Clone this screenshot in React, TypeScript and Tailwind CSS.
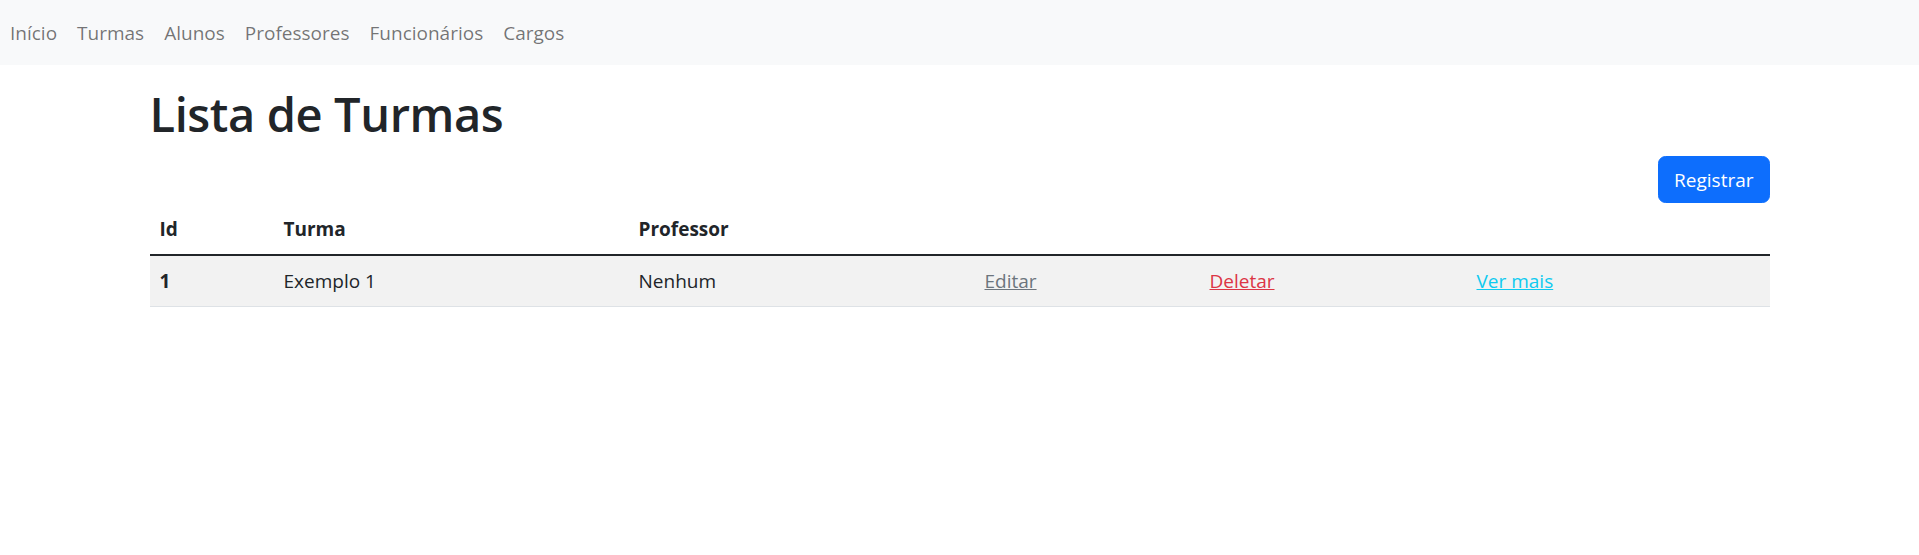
const navLinks = ["Início", "Turmas", "Alunos", "Professores", "Funcionários", "Cargos"];

const turmas = [{ id: 1, nome: "Exemplo 1", professor: "Nenhum" }];

export default function App() {
  return (
    <div
      className="min-h-screen bg-white text-[19px] leading-[30px] text-[#212529]"
      style={{ fontFamily: '"Open Sans", "Noto Sans", sans-serif' }}
    >
      <nav className="flex h-[65px] items-center bg-[#f8f9fa]">
        <ul className="flex">
          {navLinks.map((link) => (
            <li key={link}>
              <a href="#" className="block px-[10px] text-black/55">
                {link}
              </a>
            </li>
          ))}
        </ul>
      </nav>

      <main className="mx-auto w-[1620px] pt-[19px]">
        <h1 className="text-[47px] font-semibold leading-[60px] tracking-[-0.4px]">Lista de Turmas</h1>

        <div className="mt-[12px] flex justify-end">
          <button className="h-[47px] rounded-[7.5px] border border-[#0d6efd] bg-[#0d6efd] px-[15px] text-white">
            Registrar
          </button>
        </div>

        <table className="mt-[1px] w-full border-collapse text-left">
          <colgroup>
            <col className="w-[124px]" />
            <col className="w-[355px]" />
            <col className="w-[346px]" />
            <col className="w-[225px]" />
            <col className="w-[267px]" />
            <col />
          </colgroup>
          <thead>
            <tr className="border-b-[2.5px] border-[#212529]">
              <th className="p-[10px] font-bold">Id</th>
              <th className="p-[10px] font-bold">Turma</th>
              <th className="p-[10px] font-bold">Professor</th>
              <th className="p-[10px]"></th>
              <th className="p-[10px]"></th>
              <th className="p-[10px]"></th>
            </tr>
          </thead>
          <tbody>
            {turmas.map((t) => (
              <tr key={t.id} className="border-b border-[#dee2e6] bg-[#f2f2f2]">
                <th className="p-[10px] font-bold">{t.id}</th>
                <td className="p-[10px]">{t.nome}</td>
                <td className="p-[10px]">{t.professor}</td>
                <td className="p-[10px]">
                  <a href="#" className="text-[#6c757d] underline">
                    Editar
                  </a>
                </td>
                <td className="p-[10px]">
                  <a href="#" className="text-[#dc3545] underline">
                    Deletar
                  </a>
                </td>
                <td className="p-[10px]">
                  <a href="#" className="text-[#0dcaf0] underline">
                    Ver mais
                  </a>
                </td>
              </tr>
            ))}
          </tbody>
        </table>
      </main>
    </div>
  );
}
